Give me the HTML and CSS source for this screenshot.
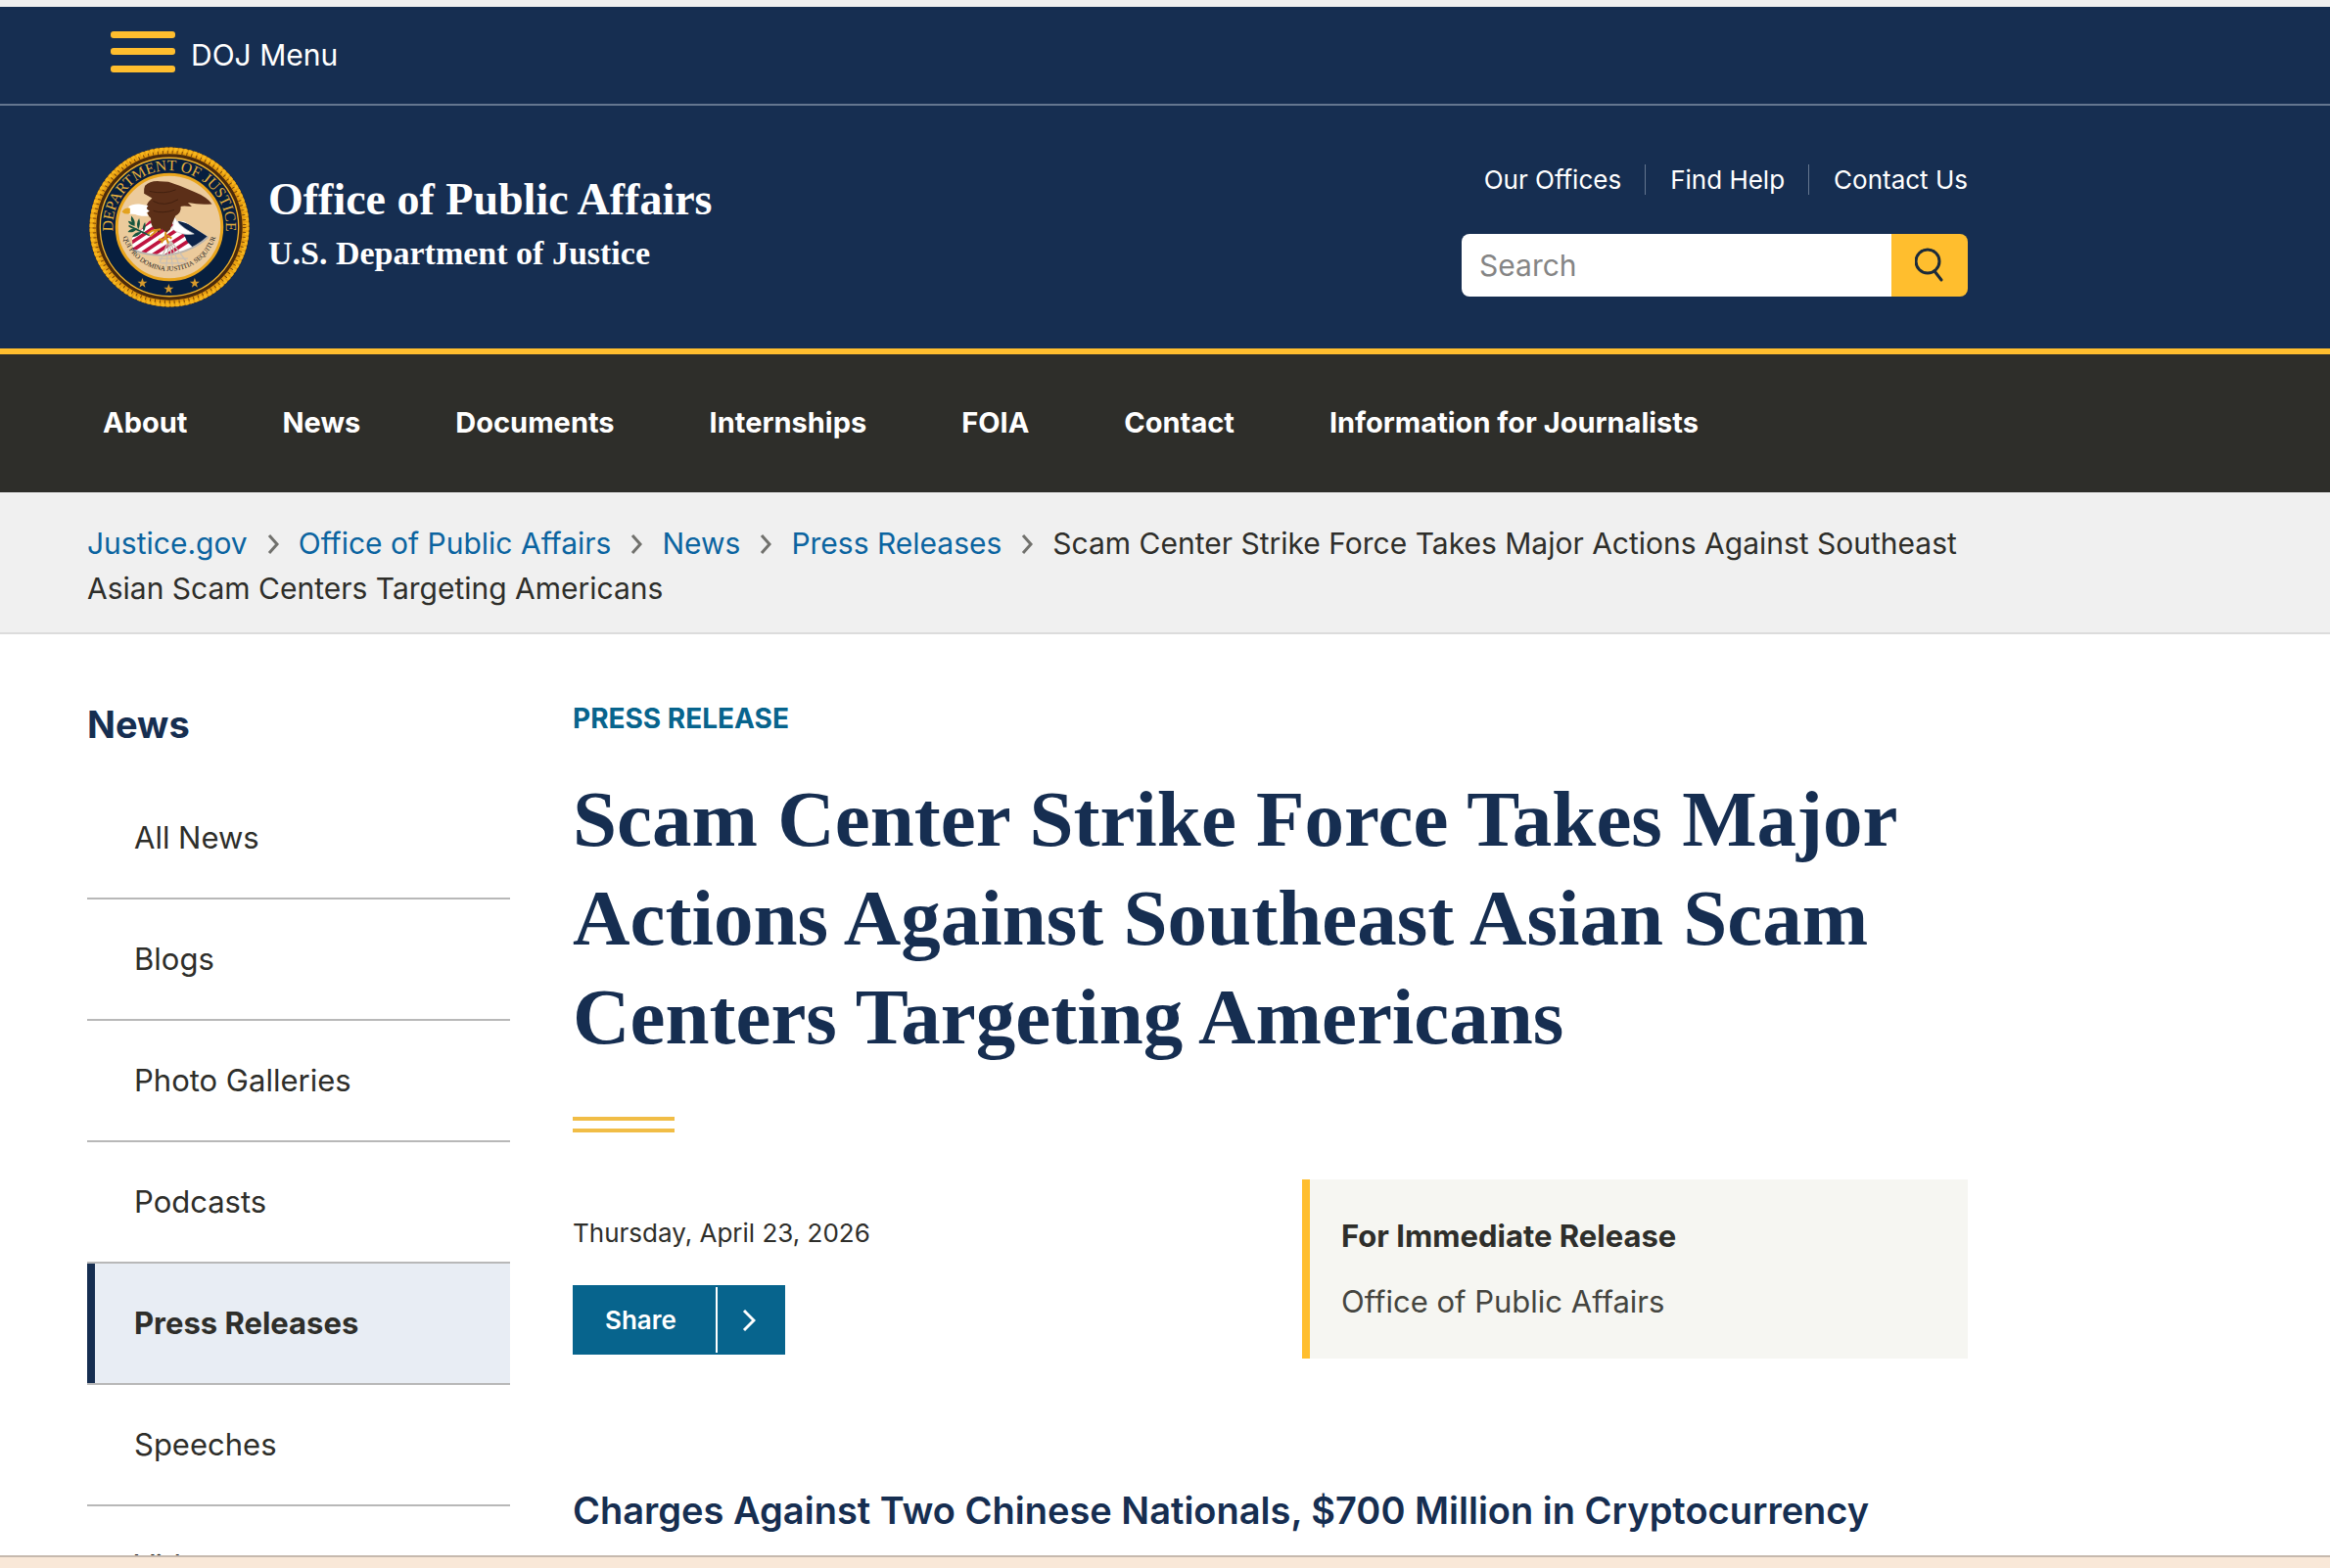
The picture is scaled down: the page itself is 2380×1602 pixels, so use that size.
FILE: index.html
```
<!DOCTYPE html>
<html lang="en">
<head>
  <meta charset="UTF-8">
  <meta name="viewport" content="width=device-width, initial-scale=1.0">
  <title>Office of Public Affairs | Scam Center Strike Force Takes Major Actions</title>
  <link rel="stylesheet" href="styles.css">
</head>
<body>
  <header class="site-header">
    <div class="menu-bar">
      <button class="menu-btn" type="button">
        <svg class="menu-icon" viewBox="0 0 66 42" aria-hidden="true">
          <rect width="66" height="7" rx="3"/>
          <rect y="17" width="66" height="7" rx="3"/>
          <rect y="35" width="66" height="7" rx="3"/>
        </svg>
        <span>DOJ Menu</span>
      </button>
    </div>

    <div class="container masthead">
      <a class="brand" href="#">
        <svg class="seal" viewBox="18 28 494 494" role="img" aria-label="Department of Justice seal">
          <defs>
            <path id="arc-top" d="M 97 320 A 174 174 0 1 1 433 320"/>
            <path id="arc-bottom" d="M 115 260 A 150 150 0 0 0 415 260"/>
            <clipPath id="shield"><path d="M150 310 L205 255 L310 258 L384 305 Q330 355 250 362 Q195 360 153 344 Z"/></clipPath>
            <path id="star" d="M0 -15 L4 -4 L15 -4 L6 3 L9 14 L0 7 L-9 14 L-6 3 L-15 -4 L-4 -4 Z"/>
          </defs>
          <!-- rope border -->
          <circle cx="265" cy="275" r="246" fill="#4a2a0c"/>
          <circle cx="265" cy="275" r="235" fill="none" stroke="#e69c10" stroke-width="20"/>
          <circle cx="265" cy="275" r="239" fill="none" stroke="#f6b51c" stroke-width="13" stroke-dasharray="10 5"/>
          <circle cx="265" cy="275" r="231" fill="none" stroke="#7a4708" stroke-width="10" stroke-dasharray="3 12"/>
          <circle cx="265" cy="275" r="213" fill="#071f3f" stroke="#f0b32c" stroke-width="4"/>
          <circle cx="265" cy="275" r="162" fill="#eccb9c" stroke="#e9a51c" stroke-width="9"/>
          <text class="seal-title"><textPath href="#arc-top" startOffset="50%">DEPARTMENT OF JUSTICE</textPath></text>
          <!-- shield -->
          <g clip-path="url(#shield)">
            <rect x="140" y="240" width="260" height="130" fill="#fff"/>
            <g stroke="#bf1440" stroke-width="11">
              <path d="M120 315 L225 245 M120 342 L250 255 M135 358 L275 265 M165 366 L300 276 M200 370 L325 290 M240 372 L345 304"/>
            </g>
            <path d="M290 255 L400 290 L345 345 L320 320 Z" fill="#0c2348"/>
          </g>
          <path d="M153 345 Q195 362 250 362 Q330 355 384 305" fill="none" stroke="#b9b4ae" stroke-width="6"/>
          <g fill="none" stroke="#c9c0b4" stroke-width="4">
            <path d="M262 318 L235 385 M264 318 L255 400 M266 318 L275 400 M268 318 L297 398 M270 318 L318 382 M232 372 L322 372 M238 386 L316 386"/>
          </g>
          <!-- olive branch -->
          <g fill="#17563f">
            <path d="M140 268 L205 298 L203 303 L140 274 Z"/>
            <path d="M148 240 Q162 255 158 272 Q144 260 148 240 Z M172 248 Q178 266 169 282 Q161 265 172 248 Z M190 260 Q195 275 186 290 Q179 275 190 260 Z"/>
            <path d="M137 290 Q150 275 166 280 Q155 294 137 290 Z M150 306 Q160 288 180 290 Q170 305 150 306 Z M138 256 Q154 258 158 271 Q142 270 138 256 Z"/>
          </g>
          <!-- eagle -->
          <path d="M278 240 Q285 250 292 262 Q310 280 341 296 Q315 300 300 294 Q282 290 272 278 Q280 272 278 240 Z" fill="#fff" stroke="#ccc" stroke-width="2"/>
          <path d="M190 148 Q205 132 235 134 L262 136 Q300 148 340 166 Q380 182 396 204 Q362 208 322 200 L334 212 Q305 208 300 212 Q302 232 284 240 Q276 255 268 282 L256 293 L242 280 L232 292 L214 276 Q206 262 208 248 Q194 236 196 215 Q190 206 212 186 L187 172 Q186 156 190 148 Z" fill="#5c2f18"/>
          <path d="M204 165 Q250 175 285 160 M215 195 Q250 215 292 190 M216 225 Q245 235 280 222" fill="none" stroke="#43200f" stroke-width="3"/>
          <path d="M140 212 Q150 203 172 204 L200 209 L194 218 L204 226 L194 231 L201 241 Q172 243 160 236 L140 234 Z" fill="#fff"/>
          <path d="M119 228 Q128 213 144 217 L144 233 Q130 238 119 228 Z" fill="#e3a21e"/>
          <g fill="none" stroke="#d8941a" stroke-width="6">
            <path d="M238 282 L212 286 L198 296 M226 286 L206 304 M254 290 L252 310 L232 314 M256 300 L240 324 M258 300 L272 310 M254 305 L262 325"/>
          </g>
          <text class="seal-motto"><textPath href="#arc-bottom" startOffset="50%">QUI PRO DOMINA JUSTITIA SEQUITUR</textPath></text>
          <g fill="#d69a2c">
            <use href="#star" x="182" y="447"/>
            <use href="#star" x="263" y="465"/>
            <use href="#star" x="343" y="447"/>
          </g>
        </svg>
        <span class="brand-text">
          <span class="brand-name">Office of Public Affairs</span>
          <span class="brand-dept">U.S. Department of Justice</span>
        </span>
      </a>

      <div class="header-tools">
        <nav class="quick-links" aria-label="Secondary">
          <a href="#">Our Offices</a>
          <a href="#">Find Help</a>
          <a href="#">Contact Us</a>
        </nav>
        <form class="search">
          <input type="search" placeholder="Search" aria-label="Search">
          <button type="button" aria-label="Submit search">
            <svg viewBox="0 0 30 36" aria-hidden="true">
              <circle cx="13" cy="15" r="12"/>
              <path d="M20 25 L27 34"/>
            </svg>
          </button>
        </form>
      </div>
    </div>
  </header>

  <nav class="main-nav" aria-label="Primary">
    <div class="container main-nav-list">
      <a href="#">About</a>
      <a href="#">News</a>
      <a href="#">Documents</a>
      <a href="#">Internships</a>
      <a href="#">FOIA</a>
      <a href="#">Contact</a>
      <a href="#">Information for Journalists</a>
    </div>
  </nav>

  <nav class="breadcrumbs" aria-label="Breadcrumbs">
    <div class="container">
      <a href="#">Justice.gov</a><svg class="crumb-arrow" viewBox="0 0 12 20" aria-hidden="true"><path d="M2 1 L10 10 L2 19"/></svg><a href="#">Office of Public Affairs</a><svg class="crumb-arrow" viewBox="0 0 12 20" aria-hidden="true"><path d="M2 1 L10 10 L2 19"/></svg><a href="#">News</a><svg class="crumb-arrow" viewBox="0 0 12 20" aria-hidden="true"><path d="M2 1 L10 10 L2 19"/></svg><a href="#">Press Releases</a><svg class="crumb-arrow" viewBox="0 0 12 20" aria-hidden="true"><path d="M2 1 L10 10 L2 19"/></svg>Scam Center Strike Force Takes Major Actions Against Southeast Asian Scam Centers Targeting Americans
    </div>
  </nav>

  <div class="container page">
    <aside class="sidebar">
      <h2>News</h2>
      <ul class="side-nav">
        <li><a href="#">All News</a></li>
        <li><a href="#">Blogs</a></li>
        <li><a href="#">Photo Galleries</a></li>
        <li><a href="#">Podcasts</a></li>
        <li><a class="current" href="#">Press Releases</a></li>
        <li><a href="#">Speeches</a></li>
        <li><a href="#">Videos</a></li>
      </ul>
    </aside>

    <main class="article">
      <p class="kicker">PRESS RELEASE</p>
      <h1>Scam Center Strike Force Takes Major Actions Against Southeast Asian Scam Centers Targeting Americans</h1>
      <div class="double-rule"></div>
      <div class="meta">
        <div class="meta-left">
          <time datetime="2026-04-23">Thursday, April 23, 2026</time>
          <button class="share" type="button">
            <span class="share-label">Share</span>
            <span class="share-arrow">
              <svg viewBox="0 0 14 22" aria-hidden="true"><path d="M2 1 L12 11 L2 21"/></svg>
            </span>
          </button>
        </div>
        <div class="release-box">
          <strong>For Immediate Release</strong>
          <span>Office of Public Affairs</span>
        </div>
      </div>
      <h2 class="subtitle">Charges Against Two Chinese Nationals, $700 Million in Cryptocurrency</h2>
    </main>
  </div>

  <div class="bottom-strip"></div>
</body>
</html>
```
FILE: styles.css
```
* {
  box-sizing: border-box;
}

body {
  margin: 0;
  height: 100vh;
  overflow: hidden;
  border-top: 7px solid #f0f0f0;
  font-family: Inter, "Liberation Sans", sans-serif;
  font-size: 30px;
  line-height: 46px;
  color: #2e2e2a;
  background: #fff;
}

a {
  color: inherit;
  text-decoration: none;
}

button {
  font-family: inherit;
  cursor: pointer;
}

.container {
  max-width: 2010px;
  padding-left: 89px;
}

/* header */
.site-header {
  background: #162e51;
  color: #fff;
  border-bottom: 6px solid #ffbe2e;
}

.menu-bar {
  padding: 22px 113px 23px;
  border-bottom: 2px solid #64768f;
}

.menu-btn {
  display: flex;
  align-items: flex-start;
  gap: 16px;
  padding: 0;
  border: none;
  background: none;
  color: #fff;
  font-size: 30px;
  line-height: 54px;
}

.menu-icon {
  width: 66px;
  height: 42px;
  margin-top: 3px;
  fill: #ffbe2e;
}

.masthead {
  display: flex;
  justify-content: space-between;
  height: 248px;
}

.brand {
  display: flex;
  gap: 19px;
  padding: 42px 0 0 2px;
}

.seal {
  width: 164px;
  height: 164px;
}

.seal-title,
.seal-motto {
  font-family: "Liberation Serif", serif;
  font-size: 47px;
  text-anchor: middle;
  fill: #e6b13c;
}

.seal-motto {
  font-size: 21px;
  fill: #222;
}

.brand-text {
  display: flex;
  flex-direction: column;
  padding-top: 26px;
  font-family: "Liberation Serif", serif;
  font-weight: bold;
}

.brand-name {
  font-size: 46px;
  line-height: 55px;
}

.brand-dept {
  font-size: 34px;
  line-height: 56px;
}

.header-tools {
  display: flex;
  flex-direction: column;
  align-items: flex-end;
  gap: 40px;
  padding-top: 60px;
}

.quick-links {
  display: flex;
  font-size: 26px;
  line-height: 31px;
}

.quick-links a + a {
  margin-left: 24px;
  padding-left: 25px;
  border-left: 1px solid #64768f;
}

.search {
  display: flex;
  width: 517px;
  height: 64px;
  border-radius: 8px;
  overflow: hidden;
}

.search input {
  flex: 1;
  min-width: 0;
  padding: 0 18px;
  border: none;
  font-family: inherit;
  font-size: 30px;
  background: #fff;
}

.search input::placeholder {
  color: #858585;
}

.search button {
  width: 78px;
  padding: 0;
  border: none;
  background: #ffbe2e;
}

.search svg {
  width: 30px;
  height: 36px;
  fill: none;
  stroke: #1c2b3a;
  stroke-width: 3;
  stroke-linecap: round;
}

/* primary nav */
.main-nav {
  background: #2e2e2a;
  color: #fff;
}

.main-nav-list {
  display: flex;
  gap: 97px;
  padding: 47px 0 48px 105px;
  font-size: 29px;
  font-weight: 700;
}

/* breadcrumbs */
.breadcrumbs {
  padding: 29px 0 22px;
  background: #f0f0f0;
  border-bottom: 2px solid #dcdcdc;
}

.breadcrumbs a {
  color: #0b64a0;
}

.crumb-arrow {
  width: 12px;
  height: 20px;
  margin: 0 20px;
  fill: none;
  stroke: #71716d;
  stroke-width: 3;
}

/* page */
.page {
  display: grid;
  grid-template-columns: 432px 1fr;
  gap: 64px;
}

.sidebar h2 {
  margin: 66px 0 0;
  font-size: 38px;
  line-height: 52px;
  color: #162e51;
}

.side-nav {
  margin: 29px 0 0;
  padding: 0;
  list-style: none;
  font-size: 31px;
}

.side-nav li + li {
  border-top: 2px solid #b8b8b8;
}

.side-nav a {
  display: block;
  padding: 38px 0 38px 40px;
  border-left: 8px solid transparent;
}

.side-nav .current {
  font-weight: 700;
  background: #e8edf4;
  border-left-color: #162e51;
}

.kicker {
  margin: 66px 0 0;
  font-size: 28px;
  line-height: 40px;
  font-weight: 700;
  color: #07648d;
}

h1 {
  margin: 33px 0 0;
  font-family: "Liberation Serif", serif;
  font-size: 81px;
  line-height: 101px;
  color: #162e51;
}

.double-rule {
  width: 104px;
  height: 16px;
  margin-top: 51px;
  border: solid #f1bd46;
  border-width: 4px 0;
}

.meta {
  display: flex;
  justify-content: space-between;
  margin-top: 48px;
}

.meta-left {
  padding-top: 35px;
}

.meta time {
  display: block;
  font-size: 26px;
  line-height: 40px;
}

.share {
  display: flex;
  margin-top: 33px;
  padding: 2px 0;
  border: none;
  background: #07648d;
  color: #fff;
  font-size: 26px;
  font-weight: 600;
  line-height: 67px;
}

.share-label {
  padding: 0 40px 0 33px;
}

.share-arrow {
  display: flex;
  align-items: center;
  width: 71px;
  padding-left: 25px;
  border-left: 2px solid #fff;
}

.share-arrow svg {
  width: 14px;
  height: 22px;
  fill: none;
  stroke: #fff;
  stroke-width: 3;
}

.release-box {
  display: flex;
  flex-direction: column;
  gap: 21px;
  width: 680px;
  padding: 35px 32px;
  font-size: 31px;
  background: #f6f6f2;
  border-left: 8px solid #ffbe2e;
}

.release-box span {
  color: #454540;
}

.subtitle {
  margin: 129px 0 0;
  font-size: 38px;
  font-weight: 600;
  line-height: 52px;
  color: #162e51;
}

.bottom-strip {
  position: fixed;
  left: 0;
  right: 0;
  bottom: 0;
  height: 13px;
  border-top: 2px solid #c6b9ae;
  background: #f9e8d8;
}
```
